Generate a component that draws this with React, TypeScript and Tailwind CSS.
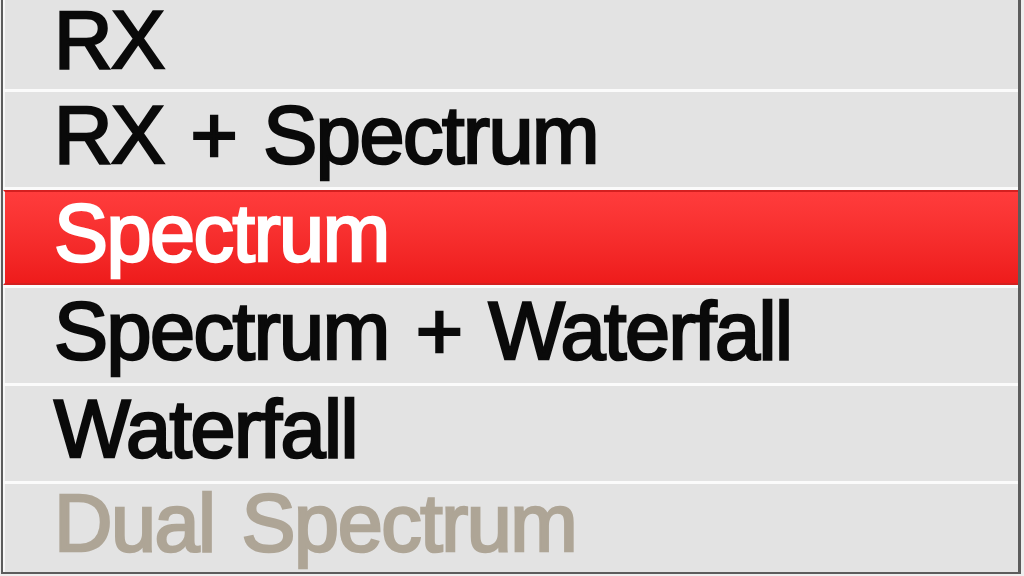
const items = [
  { label: 'RX', h: 'h-[89px]' },
  { label: 'RX + Spectrum', h: 'h-[95px]' },
  { label: 'Spectrum', h: 'h-[95px]', active: true },
  { label: 'Spectrum + Waterfall', h: 'h-[95px]' },
  { label: 'Waterfall', h: 'h-[95px]' },
  { label: 'Dual Spectrum', h: 'h-[88px]', disabled: true },
];

export default function App() {
  return (
    <div className="w-[1024px] h-[576px] overflow-hidden bg-[#eeeeee] pl-[1px] pr-[3px] pb-[2px] flex">
      <div className="flex-1 flex flex-col border-l-2 border-r-[3px] border-b-2 border-[#5c5c5c] bg-[#e3e3e3] font-['Liberation_Sans',Arial,sans-serif]">
        {items.map((it, i) => (
          <div key={i} className="flex flex-col">
            {i > 0 && <div className="h-[3px] bg-[#fbfbfb]" />}
            <div
              className={`${it.h} flex items-center pl-[49px] pb-[8px] border-l-2 ${
                it.active
                  ? 'bg-gradient-to-b from-[#ff3c3c] to-[#ee1b1b] border-y-2 border-y-[#d42020] border-l-[#f2f2f2] text-white'
                  : it.disabled
                  ? 'border-l-[#f7f7f7] text-[#aea596]'
                  : 'border-l-[#f7f7f7] text-[#0a0a0a]'
              }`}
            >
              <span className="text-[81px] leading-[1.1] font-normal tracking-[-1.5px] [word-spacing:6px] whitespace-nowrap [-webkit-text-stroke:2.5px_currentColor]">
                {it.label}
              </span>
            </div>
          </div>
        ))}
      </div>
    </div>
  );
}
